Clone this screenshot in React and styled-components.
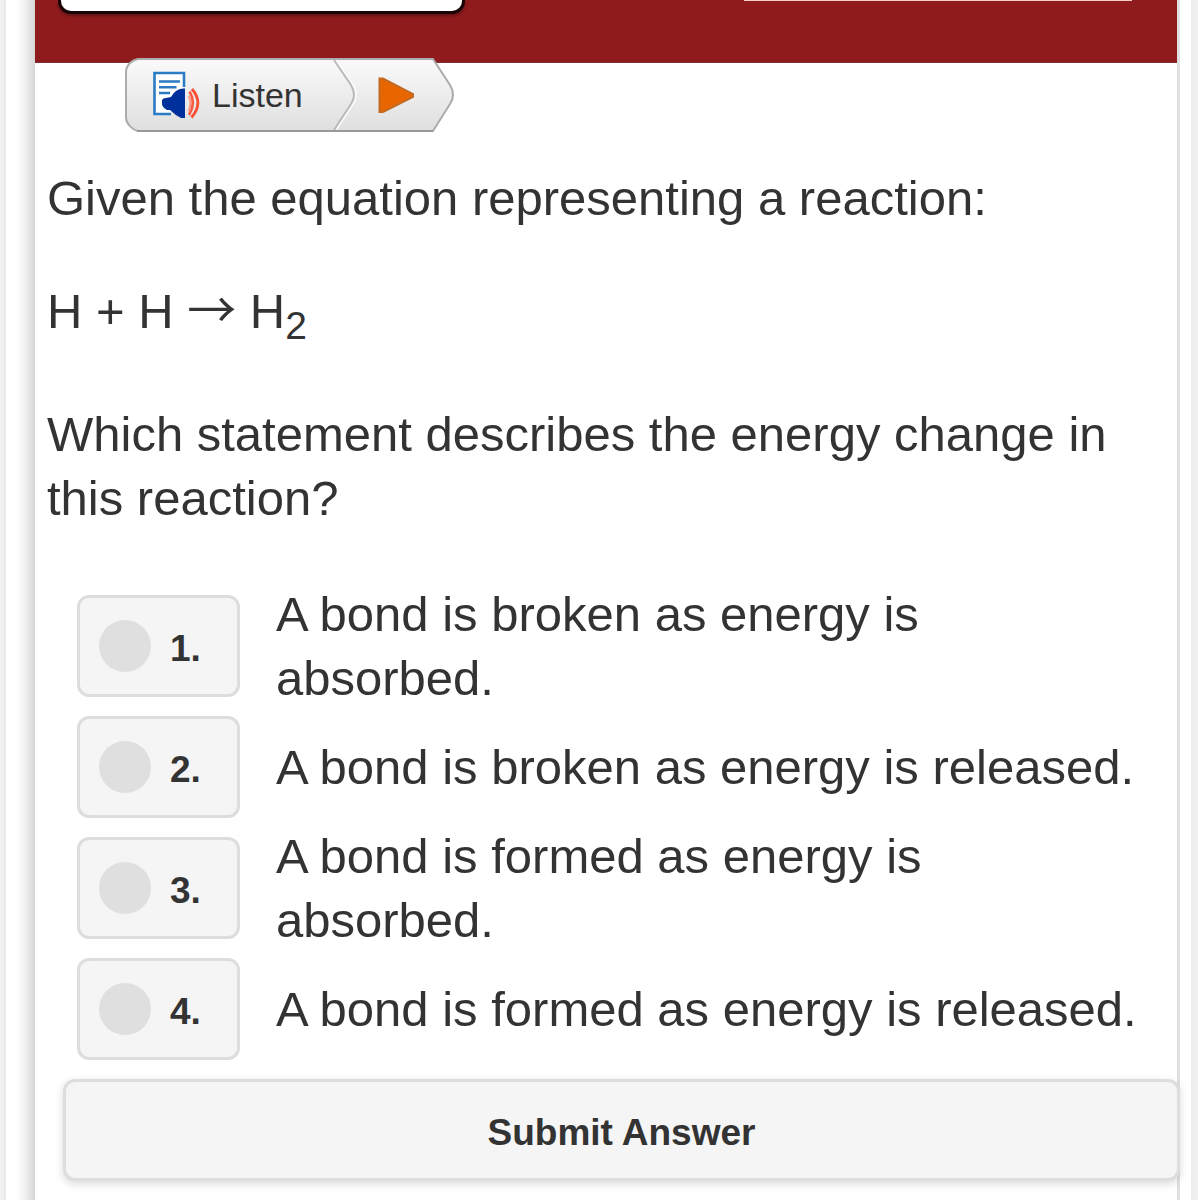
import React from "react";
import styled, { createGlobalStyle } from "styled-components";

const GlobalStyle = createGlobalStyle`
  * { box-sizing: border-box; }
  body {
    margin: 0;
    background: #fff;
    color: #333;
    font-family: "Liberation Sans", Arial, Helvetica, sans-serif;
  }
`;

const Page = styled.div`
  display: flex;
  min-height: 100vh;
`;

const LeftEdge = styled.div`
  flex: 0 0 35px;
  background: linear-gradient(
    to right,
    #f3f3f3 0,
    #e9e9e9 6px,
    #fff 6px,
    #fff 17px,
    #f1f1f1 25px,
    #d6d6d6 35px
  );
`;

const RightEdge = styled.div`
  flex: 0 0 21px;
  background: linear-gradient(
    to right,
    #dcdcdc 0,
    #e4e4e4 3px,
    #fff 3px,
    #fff 14px,
    #ececec 14px,
    #f1f1f1 21px
  );
`;

const Main = styled.main`
  flex: 1;
  min-width: 0;
  z-index: 1;
`;

const Header = styled.header`
  display: flex;
  justify-content: space-between;
  align-items: flex-start;
  height: 63px;
  padding: 0 45px 0 23px;
  background: #8f1b1d;
  border-bottom: 1px solid #7e3033;
`;

const HeaderField = styled.input`
  width: 407px;
  height: 14px;
  padding: 0 12px;
  border: 3px solid #1a0304;
  border-top: 0;
  border-radius: 0 0 13px 13px;
  background: #fff;
  box-shadow: 0 2px 3px rgba(0, 0, 0, 0.3);
`;

const HeaderRule = styled.div`
  width: 388px;
  height: 1px;
  background: #f3cdc8;
`;

const Player = styled.div`
  display: grid;
  width: 330px;
  height: 76px;
  margin: -6px 0 0 90px;
  > * { grid-area: 1 / 1; }
`;

const PlayerControls = styled.div`
  display: flex;
  z-index: 1;
`;

const PlayerButton = styled.button`
  display: flex;
  align-items: center;
  flex: ${(p) => p.$grow};
  gap: 12px;
  padding: 0 0 0 28px;
  border: 0;
  background: none;
  color: #333;
  font: 34px/40px "Liberation Sans", Arial, sans-serif;
  cursor: pointer;
`;

const Question = styled.section`
  padding: 33px 12px 0;
  font-size: 49px;
  line-height: 64px;
`;

const Paragraph = styled.p`
  margin: 0 0 ${(p) => p.$gap || 49}px;
`;

const Arrow = styled.span`
  font-family: "Noto Sans CJK JP", sans-serif;
  line-height: 48px;
`;

const Sub = styled.sub`
  font-size: 39px;
  line-height: 54px;
`;

const Options = styled.fieldset`
  margin: 0;
  padding: 0 20px 0 30px;
  border: 0;
`;

const Option = styled.div`
  display: flex;
  align-items: center;
  min-height: 114px;
  gap: 36px;
`;

const Choice = styled.label`
  display: flex;
  align-items: center;
  flex: 0 0 163px;
  height: 102px;
  gap: 19px;
  padding-left: 19px;
  border: 3px solid #ddd;
  border-radius: 12px;
  background: #f5f5f5;
  font-size: 37px;
  font-weight: bold;
  line-height: 48px;
  cursor: pointer;
`;

const ChoiceNumber = styled.span`
  padding-top: 6px;
`;

const Radio = styled.input`
  appearance: none;
  width: 52px;
  height: 52px;
  margin: 0;
  border-radius: 50%;
  background: #dfdfdf;
  &:checked { background: #8f1b1d; }
`;

const Submit = styled.button`
  display: block;
  position: relative;
  width: calc(100% - 25px);
  height: 102px;
  margin: 13px 0 0 28px;
  padding: 6px 0 0;
  border: 3px solid #ddd;
  border-radius: 12px;
  background: #f5f5f5;
  box-shadow: 0 3px 9px rgba(0, 0, 0, 0.15);
  color: #333;
  font: bold 37px/48px "Liberation Sans", Arial, sans-serif;
  cursor: pointer;
`;

const choices = [
  "A bond is broken as energy is absorbed.",
  "A bond is broken as energy is released.",
  "A bond is formed as energy is absorbed.",
  "A bond is formed as energy is released.",
];

function PlayerShape() {
  return (
    <svg width="330" height="76" viewBox="0 0 330 76" aria-hidden="true">
      <defs>
        <linearGradient id="silver" x1="0" y1="0" x2="0" y2="1">
          <stop offset="0" stopColor="#fafafa" />
          <stop offset="1" stopColor="#dfdfdf" />
        </linearGradient>
      </defs>
      <path
        d="M13 2H308L325 28Q331 38 325 47L308 74H13Q8 73 4 68Q1 65 1 60V15Q1 10 5 6Q8 3 13 2Z"
        fill="url(#silver)"
        stroke="#acacac"
        strokeWidth="2"
        strokeLinejoin="round"
      />
      <path d="M211 3L228 28Q234 38 228 47L211 73" fill="none" stroke="#fbfbfb" strokeWidth="2" />
      <path d="M209 3L226 28Q232 38 226 47L209 73" fill="none" stroke="#bababa" strokeWidth="2" />
      <path d="M12 74H308" stroke="#999" strokeWidth="2" />
    </svg>
  );
}

function ListenIcon() {
  return (
    <svg width="47" height="48" viewBox="0 0 47 48" aria-hidden="true">
      <path d="M1.5 2H31V18L18 30V43H1.5Z" fill="#fff" />
      <path d="M31 16V2H1.5V43H18" fill="none" stroke="#2b7cc4" strokeWidth="2.6" />
      <path d="M6 10.5H27M6 16.3H23.5M6 22H17" stroke="#2b79c2" strokeWidth="2.4" />
      <path d="M9 29Q10 27 13 27L18 26Q22 18 30 17.500H32V47H28Q22 44 17 39H14Q9 36 9 33Z" fill="#00309c" />
      <path d="M35.5 25Q39.500 32 35.500 40" fill="none" stroke="#ff9a88" strokeWidth="2" />
      <path d="M36.500 20.500Q43.500 32 36 44" fill="none" stroke="#fa5a3e" strokeWidth="2.6" />
      <path d="M39 18Q51 32 38.500 46.500" fill="none" stroke="#fa5034" strokeWidth="2.8" />
    </svg>
  );
}

function PlayIcon() {
  return (
    <svg width="37" height="37" viewBox="0 0 37 37" aria-hidden="true">
      <path d="M1.500 1.500H5L35 17V20L5 35H1.500Z" fill="#e96500" stroke="#c06a22" strokeWidth="2" />
    </svg>
  );
}

export default function App() {
  return (
    <>
      <GlobalStyle />
      <Page>
        <LeftEdge />
        <Main>
          <Header>
            <HeaderField type="text" aria-label="Search" />
            <HeaderRule />
          </Header>
          <Player>
            <PlayerShape />
            <PlayerControls>
              <PlayerButton type="button" $grow="0 0 225px">
                <ListenIcon />
                Listen
              </PlayerButton>
              <PlayerButton type="button" $grow="1" aria-label="Play">
                <PlayIcon />
              </PlayerButton>
            </PlayerControls>
          </Player>
          <Question>
            <Paragraph>Given the equation representing a reaction:</Paragraph>
            <Paragraph>
              H + H <Arrow>→</Arrow> H<Sub>2</Sub>
            </Paragraph>
            <Paragraph $gap={52}>Which statement describes the energy change in this reaction?</Paragraph>
            <Options aria-label="Answers">
              {choices.map((text, i) => (
                <Option key={text}>
                  <Choice htmlFor={`choice-${i}`}>
                    <Radio type="radio" name="answer" id={`choice-${i}`} />
                    <ChoiceNumber>{i + 1}.</ChoiceNumber>
                  </Choice>
                  <label htmlFor={`choice-${i}`}>{text}</label>
                </Option>
              ))}
            </Options>
          </Question>
          <Submit type="button">Submit Answer</Submit>
        </Main>
        <RightEdge />
      </Page>
    </>
  );
}
